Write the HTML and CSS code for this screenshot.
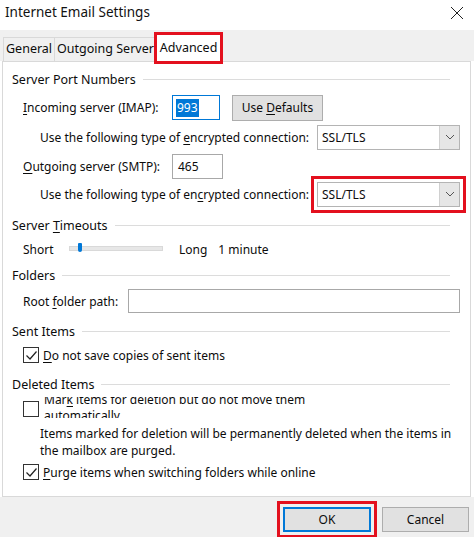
FILE: index.html
```html
<!DOCTYPE html>
<html>
<head>
<meta charset="utf-8">
<link rel="stylesheet" href="styles.css">
</head>
<body>
<div class="dialog">
  <div class="titlebar">
    <span class="title">Internet Email Settings</span>
    <svg class="close" width="14" height="14" viewBox="0 0 14 14"><path d="M1 1 L13 13 M13 1 L1 13" stroke="#222" stroke-width="1" fill="none"/></svg>
  </div>
  <div class="tabstrip">
    <div class="tab">General</div>
    <div class="tab">Outgoing Server</div>
    <div class="tab active mark-red">Advanced</div>
  </div>
  <div class="panel">
    <div class="group-title"><span>Server Port Numbers</span></div>
    <div class="row r-imap">
      <span class="lbl w-port"><u>I</u>ncoming server (IMAP):</span>
      <span class="textbox focused port"><span class="sel">993</span></span>
      <span class="btn defaults"><span>Use <u>D</u>efaults</span></span>
    </div>
    <div class="row r-enc r-enc1">
      <span class="lbl w-enc">Use the following type of <u>e</u>ncrypted connection:</span>
      <span class="combo"><span>SSL/TLS</span><span class="drop"><svg width="10" height="6" viewBox="0 0 10 6"><path d="M1 1 L5 5 L9 1" stroke="#555" stroke-width="1" fill="none"/></svg></span></span>
    </div>
    <div class="row r-smtp">
      <span class="lbl w-port"><u>O</u>utgoing server (SMTP):</span>
      <span class="textbox port smtp">465</span>
    </div>
    <div class="row r-enc">
      <span class="lbl w-enc">Use the following type of en<u>c</u>rypted connection:</span>
      <span class="combo mark-red-sm"><span>SSL/TLS</span><span class="drop"><svg width="10" height="6" viewBox="0 0 10 6"><path d="M1 1 L5 5 L9 1" stroke="#555" stroke-width="1" fill="none"/></svg></span></span>
    </div>
    <div class="group-title g-timeouts"><span>Server <u>T</u>imeouts</span></div>
    <div class="row r-slider">
      <span class="lbl w-short">Short</span>
      <span class="slider"><span class="thumb"></span></span>
      <span class="lbl long">Long</span>
      <span class="lbl">1 minute</span>
    </div>
    <div class="group-title g-folders"><span>Folders</span></div>
    <div class="row r-root">
      <span class="lbl w-root">Root <u>f</u>older path:</span>
      <span class="textbox root"></span>
    </div>
    <div class="group-title g-sent"><span>Sent Items</span></div>
    <div class="row r-check">
      <span class="check on"><svg width="13" height="13" viewBox="0 0 13 13"><path d="M1.5 6.5 L5 10 L11.5 2.5" stroke="#222" stroke-width="1.2" fill="none"/></svg></span>
      <span class="lbl"><u>D</u>o not save copies of sent items</span>
    </div>
    <div class="group-title g-deleted"><span>Deleted Items</span></div>
    <div class="row r-mark">
      <span class="check"></span>
      <span class="clip"><span class="clip-inner">Mar<u>k</u> items for deletion but do not move them<br>automatically</span></span>
    </div>
    <div class="desc">Items marked for deletion will be permanently deleted when the items in<br>the mailbox are purged.</div>
    <div class="row r-purge">
      <span class="check on"><svg width="13" height="13" viewBox="0 0 13 13"><path d="M1.5 6.5 L5 10 L11.5 2.5" stroke="#222" stroke-width="1.2" fill="none"/></svg></span>
      <span class="lbl"><u>P</u>urge items when switching folders while online</span>
    </div>
  </div>
  <div class="footer">
    <span class="btn ok mark-red-sm">OK</span>
    <span class="btn cancel">Cancel</span>
  </div>
</div>
</body>
</html>
```

FILE: styles.css
```css
* { box-sizing: border-box; }
html, body { margin: 0; padding: 0; }
body {
  width: 474px;
  height: 537px;
  overflow: hidden;
  background: #ffffff;
  font-family: "Noto Sans", "Open Sans", sans-serif;
  font-size: 12px;
  color: #0c0c0c;
}
u { text-decoration: underline; text-underline-offset: 2px; text-decoration-thickness: 1px; }
.dialog { display: flex; flex-direction: column; height: 537px; }

.titlebar {
  height: 30px;
  display: flex;
  align-items: center;
  justify-content: space-between;
  padding: 0 10px 6px 5px;
  background: #fff;
}
.title { font-size: 13.5px; color: #111; }
.close { margin-top: 2px; }

.tabstrip {
  height: 31px;
  background: #f0f0f0;
  display: flex;
  align-items: flex-end;
  padding-left: 3px;
}
.tab {
  height: 24px;
  line-height: 22px;
  padding: 0 2px;
  border: 1px solid #d9d9d9;
  border-bottom: none;
  margin-right: -1px;
  background: #f0f0f0;
  font-size: 12.5px;
}
.tab.active {
  height: 28px;
  line-height: 26px;
  background: #fff;
  position: relative;
  z-index: 2;
  margin-bottom: -1px;
  padding: 0 3px;
}
.mark-red { outline: 3px solid #e3101e; outline-offset: -1px; }
.mark-red-sm { outline: 3px solid #e3101e; outline-offset: 3px; }

.panel {
  margin: 0 3px 0 2px;
  height: 436px;
  background: #fff;
  border: 1px solid #d9d9d9;
  padding: 8px 10px 0 9px;
  display: flex;
  flex-direction: column;
}
.group-title {
  height: 18px;
  display: flex;
  align-items: center;
  white-space: nowrap;
  padding-right: 10px;
  font-size: 12.5px;
}
.group-title::after {
  content: "";
  flex: 1;
  height: 1px;
  background: #dcdcdc;
  margin-left: 7px;
}
.g-timeouts { margin-top: 8px; }
.g-folders { margin-top: 8px; }
.g-sent { margin-top: 9px; }
.g-deleted { margin-top: 11px; }

.row { display: flex; align-items: center; padding-left: 11px; white-space: nowrap; }
.r-imap { height: 27px; margin-top: 6px; }
.r-enc { height: 28px; padding-left: 28px; }
.r-enc1 { margin-top: 2px; }
.r-smtp { height: 28px; margin-top: 1px; }
.r-slider { height: 18px; margin-top: 6px; }
.r-root { height: 24px; margin-top: 5px; }
.r-check { height: 18px; margin-top: 6px; }
.r-mark { height: 24px; margin-top: 4px; align-items: flex-start; }
.r-purge { height: 18px; margin-top: 4px; }

.w-port { width: 149px; }
.w-enc { width: 277px; }
.w-root { width: 105px; }
.w-short { width: 46px; }
.long { margin-left: 16px; margin-right: 11px; }

.textbox {
  height: 25px;
  border: 1px solid #a8a8a8;
  background: #fff;
  display: flex;
  align-items: center;
  padding-left: 3px;
}
.textbox.focused { border-color: #0078d7; }
.port { width: 48px; }
.smtp { width: 51px; padding-left: 5px; }
.sel { background: #0078d7; color: #fff; padding: 0 1px; line-height: 18px; }
.root { width: 333px; height: 24px; }

.btn {
  display: inline-flex;
  align-items: center;
  justify-content: center;
  background: #e1e1e1;
  border: 1px solid #adadad;
  height: 26px;
}
.defaults { width: 91px; margin-left: 12px; height: 26px; }

.combo {
  width: 143px;
  height: 25px;
  border: 1px solid #b4b4b4;
  background: #fff;
  display: flex;
  align-items: center;
  padding-left: 4px;
  position: relative;
}
.drop {
  position: absolute;
  right: 0;
  top: 0;
  bottom: 0;
  width: 20px;
  background: #e6e6e6;
  border-left: 1px solid #d0d0d0;
  display: flex;
  align-items: center;
  justify-content: center;
}

.slider {
  width: 94px;
  height: 5px;
  background: #e7e7e7;
  border: 1px solid #d9d9d9;
  position: relative;
  margin-top: -2px;
}
.thumb {
  position: absolute;
  left: 8px;
  top: -4px;
  width: 4px;
  height: 9px;
  background: #0078d7;
  border-radius: 1px 1px 2px 2px;
}

.check {
  width: 16px;
  height: 16px;
  border: 1px solid #333;
  background: #fff;
  display: inline-flex;
  align-items: center;
  justify-content: center;
  margin-right: 4px;
  flex: none;
}
.r-mark .check { margin-top: 4px; }
.clip {
  height: 21px;
  overflow: hidden;
  display: block;
  padding-left: 1px;
}
.clip-inner { display: block; line-height: 16px; margin-top: -5px; }

.desc {
  margin-top: 4px;
  padding-left: 28px;
  line-height: 17px;
  white-space: nowrap;
}

.footer {
  flex: 1;
  background: #f0f0f0;
  display: flex;
  justify-content: flex-end;
  align-items: flex-start;
  padding: 10px 5px 0 0;
}
.ok { width: 88px; height: 25px; border: 1px solid #0078d7; box-shadow: inset 0 0 0 1px #0078d7; margin-right: 11px; }
.cancel { width: 87px; height: 25px; }
```
